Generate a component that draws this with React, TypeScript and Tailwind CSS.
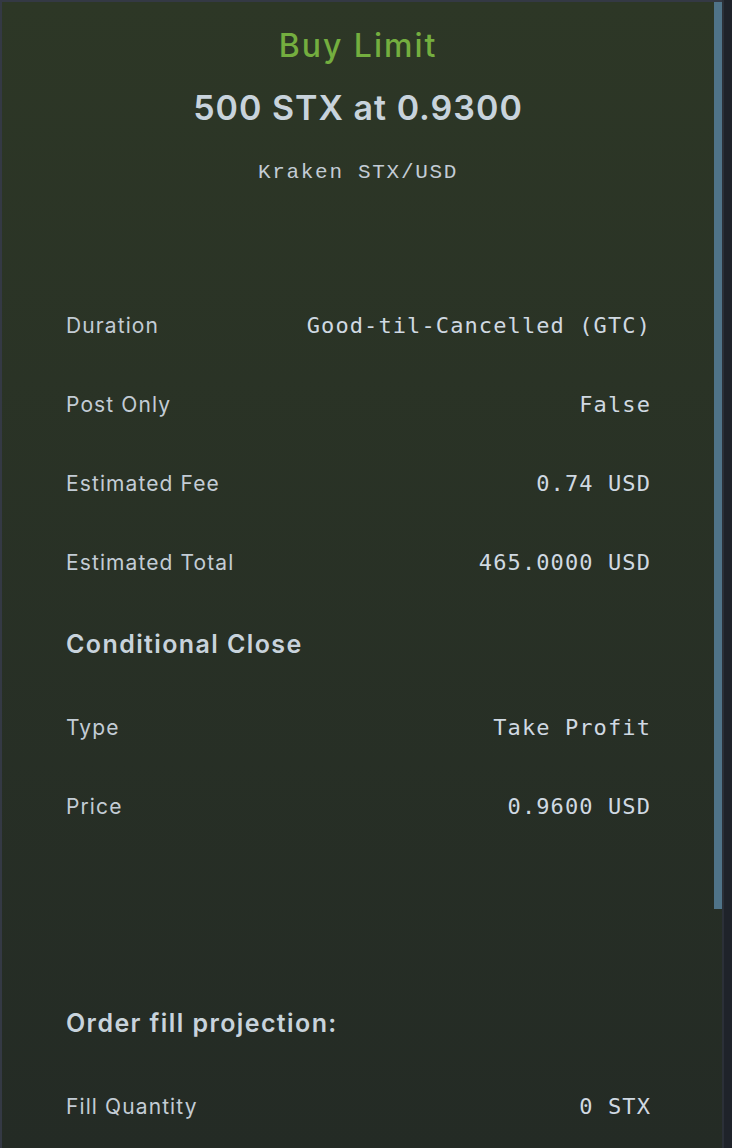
const rows1 = [
  { label: "Duration", value: "Good-til-Cancelled (GTC)" },
  { label: "Post Only", value: "False" },
  { label: "Estimated Fee", value: "0.74 USD" },
  { label: "Estimated Total", value: "465.0000 USD" },
];

const rows2 = [
  { label: "Type", value: "Take Profit" },
  { label: "Price", value: "0.9600 USD" },
];

const Row: React.FC<{ label: string; value: string }> = ({ label, value }) => (
  <div className="flex h-[79px] items-center justify-between">
    <span className="text-[21px] font-normal tracking-[1.1px] text-[#c3ccd5]">{label}</span>
    <span className="-mr-[1px] font-['DejaVu_Sans_Mono',monospace] text-[22px] tracking-[1.1px] text-[#d0d9e2]">
      {value}
    </span>
  </div>
);

export default function App() {
  return (
    <div className="flex h-[1148px] w-[732px] overflow-hidden bg-[#1f232a] font-['Inter',sans-serif]">
      <div className="flex w-[722px] border-l-2 border-t-2 border-[#343944] bg-gradient-to-b from-[#2d3726] to-[#242b25]">
        <div className="flex-1 px-[64px] pt-[24px]">
          <div className="text-center">
            <div className="text-[32px] leading-[40px] font-medium tracking-[2px] text-[#74ae3f]">
              Buy Limit
            </div>
            <div className="mt-[22px] text-[34px] leading-[40px] font-semibold tracking-[1px] text-[#c8d3dc]">
              500 STX at 0.9300
            </div>
            <div className="mt-[31px] font-['Liberation_Mono',monospace] text-[21px] leading-[28px] tracking-[1.7px] text-[#c3ccd5]">
              Kraken STX/USD
            </div>
          </div>

          <div className="mt-[99px]">
            {rows1.map((r) => (
              <Row key={r.label} label={r.label} value={r.value} />
            ))}
          </div>

          <div className="flex h-[86px] items-center text-[25px] font-semibold tracking-[1.4px] text-[#c8d3dc]">
            Conditional Close
          </div>
          {rows2.map((r) => (
            <Row key={r.label} label={r.label} value={r.value} />
          ))}

          <div className="mt-[135px] flex h-[86px] items-center text-[25px] font-semibold tracking-[1.4px] text-[#c8d3dc]">
            Order fill projection:
          </div>
          <Row label="Fill Quantity" value="0 STX" />
        </div>

        <div className="w-[8px]">
          <div className="h-[907px] bg-[#4f7388]" />
        </div>
      </div>
      <div className="w-[2px] bg-[#2b3038]" />
    </div>
  );
}
